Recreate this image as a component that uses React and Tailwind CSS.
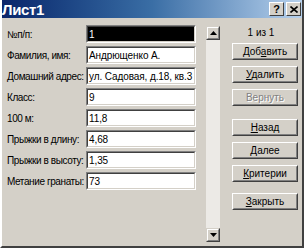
import React from 'react';

const fields = [
  ['№п/п:', '1'],
  ['Фамилия, имя:', 'Андрющенко А.'],
  ['Домашний адрес:', 'ул. Садовая, д.18, кв.3'],
  ['Класс:', '9'],
  ['100 м:', '11,8'],
  ['Прыжки в длину:', '4,68'],
  ['Прыжки в высоту:', '1,35'],
  ['Метание гранаты:', '73'],
];

// raised win2000 style button
function Btn({ pre = '', hot = '', post = '', disabled = false, className = '' }) {
  return (
    <div
      className={`h-[17px] w-[66px] border border-t-white border-l-white border-r-[#404040] border-b-[#404040] ${className}`}
    >
      <div className="h-full w-full border border-t-[#d4d0c8] border-l-[#d4d0c8] border-r-[#808080] border-b-[#808080] flex items-center justify-center">
        <span
          className={`text-[10px] leading-none ${disabled ? 'text-[#808080] [text-shadow:1px_1px_0_#ffffff]' : 'text-black'}`}
        >
          {pre}
          {hot && <span className="underline underline-offset-1">{hot}</span>}
          {post}
        </span>
      </div>
    </div>
  );
}

function ScrollArrow({ up }) {
  return (
    <div className="h-[14px] w-[14px] border border-t-[#d4d0c8] border-l-[#d4d0c8] border-r-[#404040] border-b-[#404040] bg-[#d4d0c8]">
      <div className="h-full w-full border border-t-white border-l-white border-r-[#808080] border-b-[#808080] flex items-center justify-center">
        <svg width="7" height="4" viewBox="0 0 7 4">
          {up ? <path d="M3.5 0 L7 4 L0 4 Z" fill="#000" /> : <path d="M0 0 L7 0 L3.5 4 Z" fill="#000" />}
        </svg>
      </div>
    </div>
  );
}

export default function App() {
  return (
    <div
      className="w-[304px] h-[248px] bg-[#d4d0c8] flex flex-col overflow-hidden border-l-2 border-l-white border-r-2 border-r-[#404040] border-b-2 border-b-[#404040]"
      style={{ fontFamily: '"Liberation Sans", Arial, sans-serif' }}
    >
      {/* title bar */}
      <div className="h-[18px] shrink-0 flex items-center bg-gradient-to-r from-[#0a246a] via-[#3a6ea5] to-[#b9d3ee] pl-[2px] pr-[3px] -ml-[2px] -mr-[2px]">
        <span className="text-white font-bold text-[15px] leading-none tracking-tight">Лист1</span>
        <div className="ml-auto flex gap-[2px]">
          <div className="h-[14px] w-[15px] bg-[#d4d0c8] border border-t-white border-l-white border-r-[#404040] border-b-[#404040] flex items-center justify-center">
            <span className="text-[11px] font-bold leading-none text-black">?</span>
          </div>
          <div className="h-[14px] w-[15px] bg-[#d4d0c8] border border-t-white border-l-white border-r-[#404040] border-b-[#404040] flex items-center justify-center">
            <svg width="8" height="7" viewBox="0 0 8 7">
              <path d="M0.5 0.5 L7.5 6.5 M7.5 0.5 L0.5 6.5" stroke="#000" strokeWidth="1.6" />
            </svg>
          </div>
        </div>
      </div>

      <div className="flex flex-1 min-h-0">
        {/* fields */}
        <div className="pt-[7px] pl-[5px] flex flex-col gap-[3px]">
          {fields.map(([label, value], i) => (
            <div key={label} className="flex items-center h-[18px]">
              <div className="w-[79px] text-[10px] text-black whitespace-nowrap tracking-[-0.4px]">{label}</div>
              <div className="w-[110px] h-[18px] border border-t-[#808080] border-l-[#808080] border-r-white border-b-white">
                <div
                  className={`h-full w-full border border-t-[#404040] border-l-[#404040] border-r-[#d4d0c8] border-b-[#d4d0c8] flex items-center pl-[1px] text-[10px] tracking-[-0.1px] whitespace-nowrap overflow-hidden ${i === 0 ? 'bg-black text-white' : 'bg-white text-black'}`}
                >
                  {value}
                </div>
              </div>
            </div>
          ))}
        </div>

        {/* scrollbar */}
        <div className="ml-[10px] mt-[8px] mb-[4px] w-[14px] flex flex-col bg-[#eceae6]">
          <ScrollArrow up />
          <div className="flex-1" />
          <ScrollArrow />
        </div>

        {/* buttons */}
        <div className="ml-[12px] flex flex-col pt-[8px]">
          <div className="h-[14px] text-[10px] leading-none text-black text-center pr-[8px] pt-[2px]">1 из 1</div>
          <Btn className="mt-[3px]" pre="Доб" hot="а" post="вить" />
          <Btn className="mt-[6px]" hot="У" post="далить" />
          <Btn className="mt-[6px]" pre="Вернуть" disabled />
          <Btn className="mt-[13px]" hot="Н" post="азад" />
          <Btn className="mt-[6px]" hot="Д" post="алее" />
          <Btn className="mt-[6px]" hot="К" post="ритерии" />
          <Btn className="mt-[11px]" hot="З" post="акрыть" />
        </div>
      </div>
    </div>
  );
}
